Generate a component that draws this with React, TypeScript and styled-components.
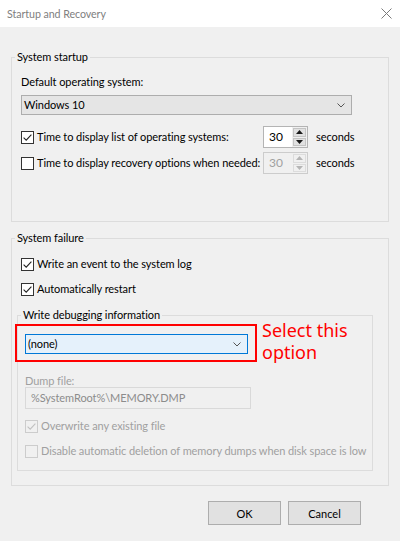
import React from "react";
import styled, { createGlobalStyle } from "styled-components";

const GlobalStyle = createGlobalStyle`
  html, body { margin: 0; padding: 0; background: #f0f0f0; }
  body { font-family: Lato, "Noto Sans", sans-serif; font-size: 11px; letter-spacing: -0.08px; color: #000; }
  * { box-sizing: border-box; }
`;

const Window = styled.div`
  width: 400px;
  height: 541px;
  background: #f0f0f0;
  display: flex;
  flex-direction: column;
  overflow: hidden;
`;

const TitleBar = styled.div`
  height: 27px;
  flex: 0 0 27px;
  background: #ffffff;
  display: flex;
  align-items: center;
  justify-content: space-between;
  padding: 0 8px 0 7px;
`;

const Title = styled.span`
  font-size: 10.7px;
  color: #808080;
  line-height: 16px;
`;

const Content = styled.div`
  padding: 22px 11px 0 11px;
  display: flex;
  flex-direction: column;
`;

const Group = styled.fieldset<{ $mt?: number }>`
  margin: ${(p) => p.$mt ?? 0}px 0 0 0;
  padding: 0;
  border: 1px solid #dcdcdc;
  min-width: 0;
  position: relative;
`;

const Legend = styled.legend`
  margin-left: 3px;
  padding: 0 2px;
  line-height: 16px;
  font-size: 11px;
  color: #000;
`;

const GroupBody = styled.div<{ $pad: string }>`
  padding: ${(p) => p.$pad};
  display: flex;
  flex-direction: column;
  position: relative;
`;

const FieldLabel = styled.div<{ $disabled?: boolean; $mt?: number; $lh?: number }>`
  margin-top: ${(p) => p.$mt ?? 0}px;
  line-height: ${(p) => p.$lh ?? 16}px;
  color: ${(p) => (p.$disabled ? "#a0a0a0" : "#000")};
`;

const Select = styled.div<{ $focused?: boolean; $width: number; $mt?: number }>`
  margin-top: ${(p) => p.$mt ?? 0}px;
  width: ${(p) => p.$width}px;
  height: 20px;
  border: 1px solid ${(p) => (p.$focused ? "#0078d7" : "#adadad")};
  background: ${(p) => (p.$focused ? "#e5f1fb" : "#e5e5e5")};
  display: flex;
  align-items: center;
  justify-content: space-between;
  padding: 0 6px 0 2px;
`;

const SelectText = styled.span`
  line-height: 16px;
  color: #000;
`;

const Row = styled.div<{ $mt?: number }>`
  margin-top: ${(p) => p.$mt ?? 0}px;
  display: flex;
  align-items: center;
  height: 22px;
`;

const CheckRow = styled.label<{ $disabled?: boolean; $width?: number; $mt?: number; $ml?: number }>`
  display: flex;
  align-items: center;
  gap: 3px;
  height: 16px;
  margin-top: ${(p) => p.$mt ?? 0}px;
  margin-left: ${(p) => p.$ml ?? 0}px;
  width: ${(p) => (p.$width ? `${p.$width}px` : "auto")};
  flex: 0 0 auto;
  color: ${(p) => (p.$disabled ? "#a0a0a0" : "#000")};
  line-height: 16px;
  white-space: nowrap;
`;

const SpinBox = styled.div<{ $disabled?: boolean }>`
  display: flex;
  width: 45px;
  height: 22px;
  border: 1px solid ${(p) => (p.$disabled ? "#cccccc" : "#b4b4b4")};
  background: ${(p) => (p.$disabled ? "#f0f0f0" : "#ffffff")};
`;

const SpinValue = styled.div<{ $disabled?: boolean }>`
  flex: 1;
  padding-left: 5px;
  line-height: 20px;
  font-size: 12px;
  color: ${(p) => (p.$disabled ? "#a0a0a0" : "#000")};
`;

const SpinButtons = styled.div`
  width: 15px;
  display: flex;
  flex-direction: column;
  gap: 1px;
  padding: 1px;
  background: #f0f0f0;
`;

const SpinButton = styled.div<{ $disabled?: boolean }>`
  flex: 1;
  background: ${(p) => (p.$disabled ? "#f0f0f0" : "#e1e1e1")};
  border: 1px solid ${(p) => (p.$disabled ? "#dcdcdc" : "#c4c4c4")};
  display: flex;
  align-items: center;
  justify-content: center;
`;

const Unit = styled.span`
  margin-left: 8px;
  line-height: 16px;
`;

const TextBox = styled.div<{ $mt?: number }>`
  margin-top: ${(p) => p.$mt ?? 0}px;
  width: 226px;
  height: 22px;
  border: 1px solid #d9d9d9;
  background: #f0f0f0;
  color: #8c8c8c;
  line-height: 20px;
  padding-left: 5px;
`;

const ButtonRow = styled.div`
  margin-top: 15px;
  display: flex;
  justify-content: flex-end;
  gap: 7px;
  padding-right: 28px;
`;

const Button = styled.button`
  width: 73px;
  height: 24px;
  border: 1px solid #adadad;
  background: #e1e1e1;
  font-family: inherit;
  font-size: 11px;
  color: #000;
  padding: 0;
`;

const RedBox = styled.div`
  position: absolute;
  left: -3px;
  top: 1px;
  width: 242px;
  height: 38px;
  border: 2px solid #ff0000;
  pointer-events: none;
`;

const Callout = styled.div`
  position: absolute;
  left: 244px;
  top: -4px;
  font-family: "Noto Sans", sans-serif;
  font-size: 18px;
  letter-spacing: 0;
  line-height: 22px;
  color: #ff0000;
  white-space: nowrap;
`;

type CheckProps = { checked?: boolean; disabled?: boolean };

const CheckBox: React.FC<CheckProps> = ({ checked, disabled }) => (
  <svg width="13" height="13" viewBox="0 0 13 13" style={{ flex: "0 0 13px" }}>
    <rect
      x="0.5"
      y="0.5"
      width="12"
      height="12"
      fill={disabled ? "#f0f0f0" : "#ffffff"}
      stroke={disabled ? "#cccccc" : "#333333"}
    />
    {checked && (
      <path
        d="M2.6 6.6 L5.2 9.2 L10.4 3.6"
        fill="none"
        stroke={disabled ? "#c0c0c0" : "#222222"}
        strokeWidth="1.1"
      />
    )}
  </svg>
);

const Chevron: React.FC = () => (
  <svg width="8" height="5" viewBox="0 0 8 5">
    <path d="M0.5 0.5 L4 4 L7.5 0.5" fill="none" stroke="#555" strokeWidth="1" />
  </svg>
);

const Triangle: React.FC<{ up?: boolean; disabled?: boolean }> = ({ up, disabled }) => (
  <svg width="7" height="4" viewBox="0 0 7 4">
    <path d={up ? "M0 4 L3.5 0 L7 4 Z" : "M0 0 L3.5 4 L7 0 Z"} fill={disabled ? "#b5b5b5" : "#1a1a1a"} />
  </svg>
);

const Spinner: React.FC<{ value: string; disabled?: boolean }> = ({ value, disabled }) => (
  <SpinBox $disabled={disabled}>
    <SpinValue $disabled={disabled}>{value}</SpinValue>
    <SpinButtons>
      <SpinButton $disabled={disabled}>
        <Triangle up disabled={disabled} />
      </SpinButton>
      <SpinButton $disabled={disabled}>
        <Triangle disabled={disabled} />
      </SpinButton>
    </SpinButtons>
  </SpinBox>
);

const CloseIcon: React.FC = () => (
  <svg width="11" height="11" viewBox="0 0 11 11">
    <path d="M0.5 0.5 L10.5 10.5 M10.5 0.5 L0.5 10.5" stroke="#7a7a7a" strokeWidth="1" fill="none" />
  </svg>
);

export default function App() {
  return (
    <>
      <GlobalStyle />
      <Window>
        <TitleBar>
          <Title>Startup and Recovery</Title>
          <CloseIcon />
        </TitleBar>
        <Content>
          <Group>
            <Legend>System startup</Legend>
            <GroupBody $pad="9px 9px 47px 9px">
              <FieldLabel>Default operating system:</FieldLabel>
              <Select $width={331} $mt={5}>
                <SelectText>Windows 10</SelectText>
                <Chevron />
              </Select>
              <Row $mt={11}>
                <CheckRow $width={242}>
                  <CheckBox checked />
                  Time to display list of operating systems:
                </CheckRow>
                <Spinner value="30" />
                <Unit>seconds</Unit>
              </Row>
              <Row $mt={4}>
                <CheckRow $width={242}>
                  <CheckBox />
                  Time to display recovery options when needed:
                </CheckRow>
                <Spinner value="30" disabled />
                <Unit>seconds</Unit>
              </Row>
            </GroupBody>
          </Group>

          <Group $mt={8}>
            <Legend>System failure</Legend>
            <GroupBody $pad="10px 15px 14px 5px">
              <CheckRow $ml={4}>
                <CheckBox checked />
                Write an event to the system log
              </CheckRow>
              <CheckRow $ml={4} $mt={9}>
                <CheckBox checked />
                Automatically restart
              </CheckRow>
              <Group $mt={10}>
                <Legend>Write debugging information</Legend>
                <GroupBody $pad="11px 7px 11px 7px">
                  <Select $width={223} $focused>
                    <SelectText>(none)</SelectText>
                    <Chevron />
                  </Select>
                  <FieldLabel $disabled $mt={20} $lh={13}>
                    Dump file:
                  </FieldLabel>
                  <TextBox>%SystemRoot%\MEMORY.DMP</TextBox>
                  <CheckRow $disabled $mt={9}>
                    <CheckBox checked disabled />
                    Overwrite any existing file
                  </CheckRow>
                  <CheckRow $disabled $mt={9}>
                    <CheckBox disabled />
                    Disable automatic deletion of memory dumps when disk space is low
                  </CheckRow>
                  <RedBox />
                  <Callout>
                    Select this
                    <br />
                    option
                  </Callout>
                </GroupBody>
              </Group>
            </GroupBody>
          </Group>

          <ButtonRow>
            <Button>OK</Button>
            <Button>Cancel</Button>
          </ButtonRow>
        </Content>
      </Window>
    </>
  );
}
